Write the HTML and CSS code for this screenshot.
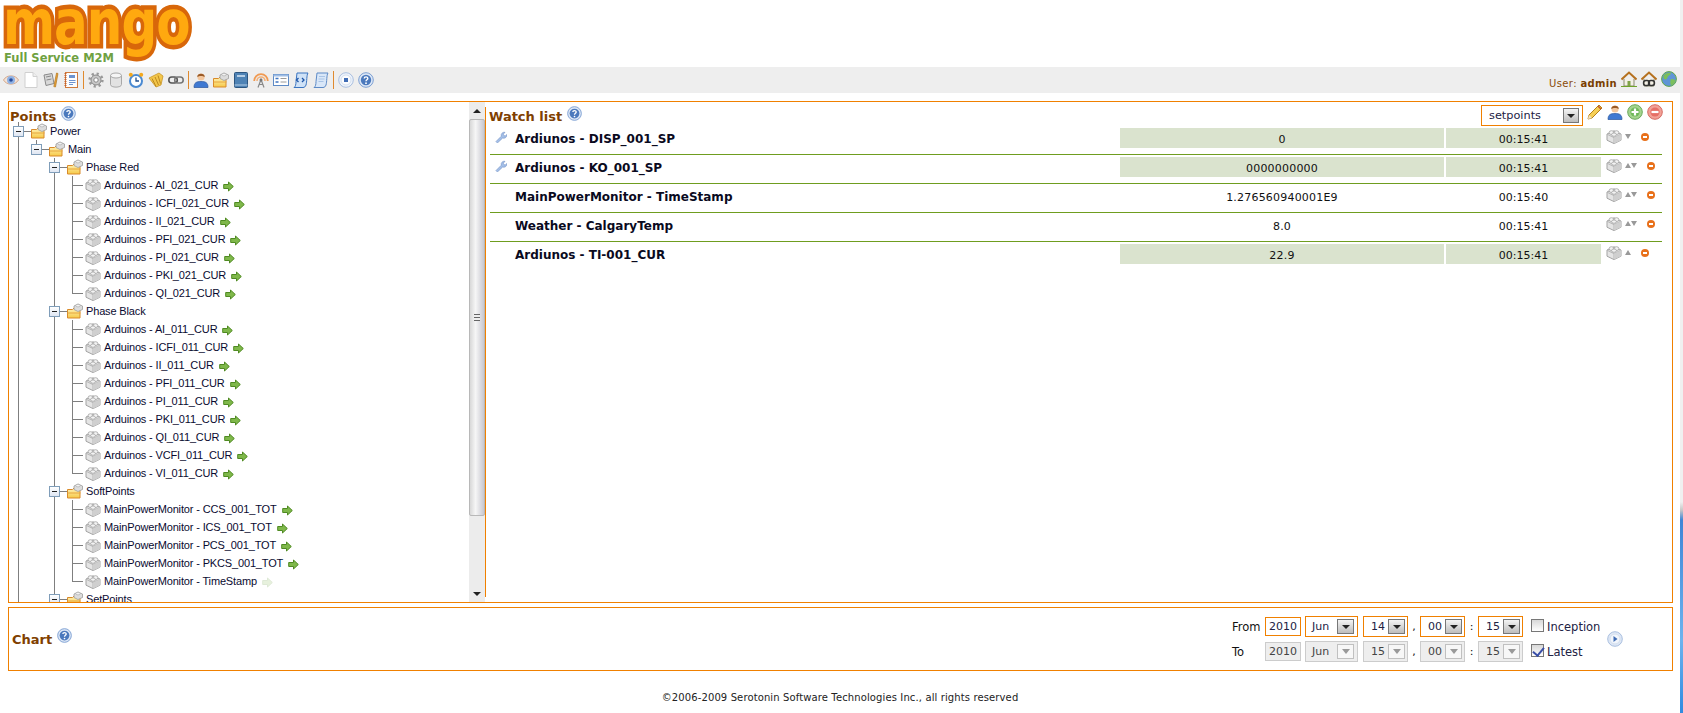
FILE: index.html
```html
<!DOCTYPE html>
<html lang="en">
<head>
<meta charset="utf-8">
<title>Mango - Watch list</title>
<link rel="stylesheet" href="styles.css">
</head>
<body>
<svg class="defs" width="0" height="0" aria-hidden="true">
  <defs>
    <linearGradient id="gYel" x1="0" y1="0" x2="0" y2="1"><stop offset="0" stop-color="#fff3b8"/><stop offset="1" stop-color="#f6c948"/></linearGradient>
    <symbol id="brick" viewBox="0 0 16 16">
      <path d="M1 6 8 2.800 15 6v6.200L8 15.600 1 12.200z" fill="#e4e4e4" stroke="#a3a3a3"/>
      <path d="M1 6.200 8 9.600 15 6.200M8 9.600v6" fill="none" stroke="#b5b5b5"/>
      <path d="M8 9.600 15 6.200v6L8 15.600z" fill="#cfcfcf"/>
      <ellipse cx="5.500" cy="4.600" rx="2.400" ry="1.900" fill="#f3f3f3" stroke="#a3a3a3" stroke-width=".8"/>
      <ellipse cx="10.500" cy="4.600" rx="2.400" ry="1.900" fill="#f3f3f3" stroke="#a3a3a3" stroke-width=".8"/>
      <ellipse cx="8" cy="6.600" rx="2.400" ry="1.700" fill="#f3f3f3" stroke="#a3a3a3" stroke-width=".8"/>
    </symbol>
    <symbol id="folder" viewBox="0 0 16 16">
      <path d="M.5 6.500h5l1.500-1.500h6v10H.5z" fill="url(#gYel)" stroke="#d98a2a"/>
      <path d="M.5 10h13" stroke="#e6a63c"/>
      <path d="M7 3 11 1l4.500 2v3.500L11 8.500 7 6.500z" fill="#dcdcdc" stroke="#9d9d9d" stroke-width=".8"/>
      <ellipse cx="11" cy="2.600" rx="2.200" ry="1.300" fill="#f3f3f3" stroke="#a3a3a3" stroke-width=".6"/>
    </symbol>
    <symbol id="go" viewBox="0 0 11 11">
      <path d="M.7 3.500h4.800V1l4.800 4.500L5.500 10V7.500H.7z" fill="#7fb84a" stroke="#4f8a22"/>
    </symbol>
    <symbol id="help" viewBox="0 0 16 16">
      <circle cx="8" cy="8" r="7.300" fill="#dce7f6" stroke="#7d9fd2"/>
      <circle cx="8" cy="8" r="5.200" fill="#4b79bd"/>
      <path d="M6.200 6.500C6.300 4.400 9.800 4.400 9.800 6.400 9.800 7.800 8 7.700 8 9.200" fill="none" stroke="#fff" stroke-width="1.400"/>
      <circle cx="8" cy="11.200" r=".9" fill="#fff"/>
    </symbol>
    <symbol id="eye" viewBox="0 0 16 16">
      <path d="M.5 8C3.500 2.500 12.500 2.500 15.500 8 12.500 13.500 3.500 13.500.5 8z" fill="#f4e2d6" stroke="#d3a88c"/>
      <circle cx="8" cy="8" r="4" fill="#8fb2e4"/><circle cx="8" cy="8" r="1.800" fill="#2a4c9a"/>
    </symbol>
    <symbol id="page" viewBox="0 0 16 16"><path d="M2 .5h8l4 4v11H2z" fill="#fff" stroke="#d0d0d0"/><path d="M10 .5v4h4" fill="#eee" stroke="#d0d0d0"/></symbol>
    <symbol id="tools" viewBox="0 0 16 16">
      <path d="M1 3l8-1.500 2 10-8 2z" fill="#d8d8d8" stroke="#8a8a8a"/><path d="M3 5l5-1M3.500 8l5-1" stroke="#8a8a8a"/>
      <path d="M13.500 1 15 1.500 12.500 15 10.800 14.600z" fill="#e9a43a" stroke="#a86a10" stroke-width=".6"/>
    </symbol>
    <symbol id="note" viewBox="0 0 16 16">
      <rect x="2.500" y=".5" width="12" height="15" fill="#fdfdfd" stroke="#d07a3c"/><path d="M2.500 1v14" stroke="#c6602a" stroke-width="2" stroke-dasharray="1 1"/>
      <rect x="6" y="3" width="6" height="3" fill="#6d93cf"/><path d="M6 8.500h6.500M6 10.500h6.500M6 12.500h4" stroke="#6d93cf"/>
    </symbol>
    <symbol id="gear" viewBox="0 0 16 16">
      <circle cx="8" cy="8" r="5" fill="#c9c9c9" stroke="#888"/>
      <circle cx="8" cy="8" r="6.400" fill="none" stroke="#999" stroke-width="2.500" stroke-dasharray="2.200 2.800"/>
      <circle cx="8" cy="8" r="2.200" fill="#fff" stroke="#888"/>
    </symbol>
    <symbol id="db" viewBox="0 0 16 16">
      <path d="M2.500 3.500v9C2.500 16 13.500 16 13.500 12.500v-9z" fill="#e2e2e2" stroke="#a8a8a8"/>
      <ellipse cx="8" cy="3.500" rx="5.500" ry="2.500" fill="#f5f5f5" stroke="#a8a8a8"/>
    </symbol>
    <symbol id="clock" viewBox="0 0 16 16">
      <circle cx="8" cy="9" r="6" fill="#fff" stroke="#4a8ad2" stroke-width="2"/>
      <path d="M8 5.500V9h3" fill="none" stroke="#1f4f90" stroke-width="1.300"/>
      <circle cx="2.800" cy="2.800" r="2" fill="#f4a81c"/><circle cx="13.200" cy="2.800" r="2" fill="#f4a81c"/>
    </symbol>
    <symbol id="horn" viewBox="0 0 16 16">
      <path d="M1 6 11 1l4 3-2 9-5 2z" fill="#f3c64a" stroke="#c8952a" stroke-width=".8"/>
      <path d="M4 6.500l4 8M7 5l3.500 8M10 3.500l2.500 8" stroke="#b5811a" stroke-width=".9"/>
    </symbol>
    <symbol id="link" viewBox="0 0 16 16">
      <rect x=".8" y="5" width="8.500" height="6" rx="3" fill="none" stroke="#555" stroke-width="1.600"/>
      <rect x="6.700" y="5" width="8.500" height="6" rx="3" fill="none" stroke="#777" stroke-width="1.600"/>
    </symbol>
    <symbol id="user" viewBox="0 0 16 16">
      <path d="M1 15.500c0-5 2.500-6 7-6s7 1 7 6z" fill="#3f79d2" stroke="#2a569c" stroke-width=".7"/>
      <circle cx="8" cy="5" r="3.600" fill="#f3c79e"/><path d="M4.300 5C4 .7 12 .7 11.700 5 10 3.500 6 3.500 4.300 5z" fill="#9a5a26"/>
    </symbol>
    <symbol id="book" viewBox="0 0 16 16">
      <rect x="1.500" y=".5" width="13" height="15" rx="1" fill="#4f83b5" stroke="#2d5680"/>
      <rect x="4" y="3" width="8" height="2" fill="#b7cfe6"/><path d="M1.500 13h13" stroke="#b7cfe6"/>
    </symbol>
    <symbol id="tower" viewBox="0 0 16 16">
      <path d="M1.200 9a6.800 6.800 0 0 1 13.600 0" fill="none" stroke="#f09a52" stroke-width="1.800"/>
      <path d="M4 9a4 4 0 0 1 8 0" fill="none" stroke="#f4b27a" stroke-width="1.600"/>
      <path d="M5 15.500 8 7.500l3 8M6 12.500h4" fill="none" stroke="#888" stroke-width="1.200"/><circle cx="8" cy="8" r="1.500" fill="#777"/>
    </symbol>
    <symbol id="form" viewBox="0 0 16 16">
      <rect x=".5" y="2.500" width="15" height="11" fill="#fff" stroke="#5d8ac6"/><path d="M.5 3.500h15" stroke="#9fbde4" stroke-width="2"/>
      <path d="M2.500 6.500h3M2.500 10h3" stroke="#3f74c0" stroke-width="1.500"/><path d="M7.500 6.500h6M7.500 10h6" stroke="#9a9a9a"/>
    </symbol>
    <symbol id="script" viewBox="0 0 16 16">
      <path d="M4 1h11c-1.500 2-1 9-2 12-.5 1.500-1.500 2.500-3 2.500H1c1.500-1 2-3 2-6z" fill="#cfe2f7" stroke="#3a74c0"/>
      <path d="M5.500 6 3.500 8l2 2M9 6l2 2-2 2" fill="none" stroke="#1f56a8" stroke-width="1.300"/>
    </symbol>
    <symbol id="script2" viewBox="0 0 16 16">
      <path d="M4 1h11c-1.500 2-1 9-2 12-.5 1.500-1.500 2.500-3 2.500H1c1.500-1 2-3 2-6z" fill="#d9e7f8" stroke="#5d8ac6"/>
      <path d="M6 4.500h6M5.500 7h6M5.500 9.500h5" stroke="#a9c4e6"/>
    </symbol>
    <symbol id="stop" viewBox="0 0 16 16">
      <circle cx="8" cy="8" r="7.300" fill="#eef3fb" stroke="#a9bfdf"/><circle cx="8" cy="8" r="5" fill="#fbfcfe" stroke="#d3dfef"/><rect x="6" y="6" width="4" height="4" fill="#3f6cb5"/>
    </symbol>
    <symbol id="play" viewBox="0 0 16 16">
      <circle cx="8" cy="8" r="7.300" fill="#dfe8f6" stroke="#a9bfdf"/><circle cx="8" cy="8" r="5" fill="#f2f6fc" stroke="#d3dfef"/><path d="M6.500 5 10.500 8l-4 3z" fill="#3f6cb5"/>
    </symbol>
    <symbol id="home" viewBox="0 0 16 16">
      <path d="M3 8v7h10V8" fill="#f3f0e6" stroke="#8a8a70"/><rect x="6.500" y="10" width="3" height="5" fill="#7fa24a"/>
      <path d="M.5 8.500 8 1.500l7.500 7" fill="none" stroke="#b5711f" stroke-width="2"/>
      <path d="M0 15.500h16" stroke="#6fa32a"/>
    </symbol>
    <symbol id="homelink" viewBox="0 0 16 16">
      <path d="M3 8v7h10V8" fill="#f3f0e6" stroke="#8a8a70"/>
      <path d="M.5 8.500 8 1.500l7.500 7" fill="none" stroke="#b5711f" stroke-width="2"/>
      <rect x="2.500" y="9.500" width="6" height="5" rx="2.500" fill="none" stroke="#333" stroke-width="1.400"/><rect x="7.500" y="9.500" width="6" height="5" rx="2.500" fill="none" stroke="#333" stroke-width="1.400"/>
    </symbol>
    <symbol id="globe" viewBox="0 0 16 16">
      <circle cx="8" cy="8" r="7.400" fill="#5f95d6" stroke="#63a84a"/>
      <path d="M3 4c2-2 5-2.500 7-2 0 2-2 2-3 3.500S6 9 4 8.500 2 6 3 4zM10 8c2 0 4 .5 4.500 1.500-.5 2.500-2.500 4.500-4.500 5-1-2-1-4.500 0-6.500z" fill="#7cc05a"/>
    </symbol>
    <symbol id="pencil" viewBox="0 0 16 16">
      <path d="M1 15l1-4L12 1l3 3L5 14z" fill="#f6cf55" stroke="#b5811a"/><path d="M1 15l1-4 3 3z" fill="#f4e3c4"/><path d="M11 2l3 3" stroke="#c0562a" stroke-width="1.500"/>
    </symbol>
    <symbol id="add" viewBox="0 0 16 16">
      <circle cx="8" cy="8" r="7.300" fill="#a4d48e" stroke="#6ba85a"/><circle cx="8" cy="8" r="4.600" fill="#6fb85a"/><path d="M8 4.500v7M4.500 8h7" stroke="#fff" stroke-width="2.200"/>
    </symbol>
    <symbol id="del" viewBox="0 0 16 16">
      <circle cx="8" cy="8" r="7.300" fill="#f2a096" stroke="#d56a62"/><circle cx="8" cy="8" r="4.600" fill="#e66f66"/><path d="M4.500 8h7" stroke="#fff" stroke-width="2.200"/>
    </symbol>
    <symbol id="wrench" viewBox="0 0 12 12">
      <path d="M1 10.500 6.300 5.200C5.600 3 7.500.8 10 1.300L8.300 3.200 9 4.700l1.500.3L11.800 3.400C12.200 6 10 7.800 7.700 7L2.400 12z" fill="#a5c0e8" stroke="#6f8fc5" stroke-width=".6"/>
    </symbol>
  </defs>
</svg>

<div class="desktop-edge"></div>

<div class="page">
  <header class="masthead">
    <div class="logo"><span class="logo-word">mango</span><span class="logo-tag">Full Service M2M</span></div>
  </header>

  <nav class="toolbar">
    <div class="tools">
      <svg class="ic"><use href="#eye"/></svg>
      <svg class="ic"><use href="#page"/></svg>
      <svg class="ic"><use href="#tools"/></svg>
      <svg class="ic"><use href="#note"/></svg>
      <span class="tsep"></span>
      <svg class="ic"><use href="#gear"/></svg>
      <svg class="ic"><use href="#db"/></svg>
      <svg class="ic"><use href="#clock"/></svg>
      <svg class="ic"><use href="#horn"/></svg>
      <svg class="ic"><use href="#link"/></svg>
      <span class="tsep"></span>
      <svg class="ic"><use href="#user"/></svg>
      <svg class="ic"><use href="#folder"/></svg>
      <svg class="ic"><use href="#book"/></svg>
      <svg class="ic"><use href="#tower"/></svg>
      <svg class="ic"><use href="#form"/></svg>
      <svg class="ic"><use href="#script"/></svg>
      <svg class="ic"><use href="#script2"/></svg>
      <span class="tsep"></span>
      <svg class="ic"><use href="#stop"/></svg>
      <svg class="ic"><use href="#help"/></svg>
    </div>
    <div class="session">
      <span class="user-line">User: <b>admin</b></span>
      <svg class="ic"><use href="#home"/></svg>
      <svg class="ic"><use href="#homelink"/></svg>
      <svg class="ic"><use href="#globe"/></svg>
    </div>
  </nav>

  <main class="panel">
    <section class="points">
      <div class="tree-col">
        <h2 class="title">Points <svg class="ic help"><use href="#help"/></svg></h2>
        <ul class="tree">
          <li class="node"><div class="row"><span class="box"></span><span class="dash"></span><svg class="ic"><use href="#folder"/></svg><span class="label">Power</span></div>
            <ul>
              <li class="node last"><div class="row"><span class="box"></span><span class="dash"></span><svg class="ic"><use href="#folder"/></svg><span class="label">Main</span></div>
                <ul>
                  <li class="node"><div class="row"><span class="box"></span><span class="dash"></span><svg class="ic"><use href="#folder"/></svg><span class="label">Phase Red</span></div>
                    <ul>
                      <li class="node"><div class="row"><span class="tick"></span><svg class="ic"><use href="#brick"/></svg><span class="label">Arduinos - AI_021_CUR</span><svg class="go"><use href="#go"/></svg></div></li>
                      <li class="node"><div class="row"><span class="tick"></span><svg class="ic"><use href="#brick"/></svg><span class="label">Arduinos - ICFI_021_CUR</span><svg class="go"><use href="#go"/></svg></div></li>
                      <li class="node"><div class="row"><span class="tick"></span><svg class="ic"><use href="#brick"/></svg><span class="label">Arduinos - II_021_CUR</span><svg class="go"><use href="#go"/></svg></div></li>
                      <li class="node"><div class="row"><span class="tick"></span><svg class="ic"><use href="#brick"/></svg><span class="label">Arduinos - PFI_021_CUR</span><svg class="go"><use href="#go"/></svg></div></li>
                      <li class="node"><div class="row"><span class="tick"></span><svg class="ic"><use href="#brick"/></svg><span class="label">Arduinos - PI_021_CUR</span><svg class="go"><use href="#go"/></svg></div></li>
                      <li class="node"><div class="row"><span class="tick"></span><svg class="ic"><use href="#brick"/></svg><span class="label">Arduinos - PKI_021_CUR</span><svg class="go"><use href="#go"/></svg></div></li>
                      <li class="node last"><div class="row"><span class="tick"></span><svg class="ic"><use href="#brick"/></svg><span class="label">Arduinos - QI_021_CUR</span><svg class="go"><use href="#go"/></svg></div></li>
                    </ul>
                  </li>
                  <li class="node"><div class="row"><span class="box"></span><span class="dash"></span><svg class="ic"><use href="#folder"/></svg><span class="label">Phase Black</span></div>
                    <ul>
                      <li class="node"><div class="row"><span class="tick"></span><svg class="ic"><use href="#brick"/></svg><span class="label">Arduinos - AI_011_CUR</span><svg class="go"><use href="#go"/></svg></div></li>
                      <li class="node"><div class="row"><span class="tick"></span><svg class="ic"><use href="#brick"/></svg><span class="label">Arduinos - ICFI_011_CUR</span><svg class="go"><use href="#go"/></svg></div></li>
                      <li class="node"><div class="row"><span class="tick"></span><svg class="ic"><use href="#brick"/></svg><span class="label">Arduinos - II_011_CUR</span><svg class="go"><use href="#go"/></svg></div></li>
                      <li class="node"><div class="row"><span class="tick"></span><svg class="ic"><use href="#brick"/></svg><span class="label">Arduinos - PFI_011_CUR</span><svg class="go"><use href="#go"/></svg></div></li>
                      <li class="node"><div class="row"><span class="tick"></span><svg class="ic"><use href="#brick"/></svg><span class="label">Arduinos - PI_011_CUR</span><svg class="go"><use href="#go"/></svg></div></li>
                      <li class="node"><div class="row"><span class="tick"></span><svg class="ic"><use href="#brick"/></svg><span class="label">Arduinos - PKI_011_CUR</span><svg class="go"><use href="#go"/></svg></div></li>
                      <li class="node"><div class="row"><span class="tick"></span><svg class="ic"><use href="#brick"/></svg><span class="label">Arduinos - QI_011_CUR</span><svg class="go"><use href="#go"/></svg></div></li>
                      <li class="node"><div class="row"><span class="tick"></span><svg class="ic"><use href="#brick"/></svg><span class="label">Arduinos - VCFI_011_CUR</span><svg class="go"><use href="#go"/></svg></div></li>
                      <li class="node last"><div class="row"><span class="tick"></span><svg class="ic"><use href="#brick"/></svg><span class="label">Arduinos - VI_011_CUR</span><svg class="go"><use href="#go"/></svg></div></li>
                    </ul>
                  </li>
                  <li class="node"><div class="row"><span class="box"></span><span class="dash"></span><svg class="ic"><use href="#folder"/></svg><span class="label">SoftPoints</span></div>
                    <ul>
                      <li class="node"><div class="row"><span class="tick"></span><svg class="ic"><use href="#brick"/></svg><span class="label">MainPowerMonitor - CCS_001_TOT</span><svg class="go"><use href="#go"/></svg></div></li>
                      <li class="node"><div class="row"><span class="tick"></span><svg class="ic"><use href="#brick"/></svg><span class="label">MainPowerMonitor - ICS_001_TOT</span><svg class="go"><use href="#go"/></svg></div></li>
                      <li class="node"><div class="row"><span class="tick"></span><svg class="ic"><use href="#brick"/></svg><span class="label">MainPowerMonitor - PCS_001_TOT</span><svg class="go"><use href="#go"/></svg></div></li>
                      <li class="node"><div class="row"><span class="tick"></span><svg class="ic"><use href="#brick"/></svg><span class="label">MainPowerMonitor - PKCS_001_TOT</span><svg class="go"><use href="#go"/></svg></div></li>
                      <li class="node last"><div class="row"><span class="tick"></span><svg class="ic"><use href="#brick"/></svg><span class="label">MainPowerMonitor - TimeStamp</span><svg class="go faded"><use href="#go"/></svg></div></li>
                    </ul>
                  </li>
                  <li class="node"><div class="row"><span class="box"></span><span class="dash"></span><svg class="ic"><use href="#folder"/></svg><span class="label">SetPoints</span></div></li>
                </ul>
              </li>
            </ul>
          </li>
        </ul>
      </div>
      <div class="vscroll">
        <span class="sb-btn"><i class="tri up dark"></i></span>
        <span class="sb-thumb"><i class="grip"></i></span>
        <span class="sb-track"></span>
        <span class="sb-btn"><i class="tri down dark"></i></span>
      </div>
    </section>
    <span class="divider"></span>

    <section class="watch">
      <div class="watch-head">
        <h2 class="title">Watch list <svg class="ic help"><use href="#help"/></svg></h2>
        <div class="watch-tools">
          <div class="sel wide"><span>setpoints</span><i class="arrow"><i class="tri down dark"></i></i></div>
          <svg class="ic"><use href="#pencil"/></svg>
          <svg class="ic"><use href="#user"/></svg>
          <svg class="ic"><use href="#add"/></svg>
          <svg class="ic"><use href="#del"/></svg>
        </div>
      </div>

      <div class="wrow">
        <svg class="wrench"><use href="#wrench"/></svg>
        <span class="wname">Ardiunos - DISP_001_SP</span>
        <span class="wval on">0</span>
        <span class="wtime on">00:15:41</span>
        <span class="wact"><svg class="ic"><use href="#brick"/></svg><i class="tri down"></i><i class="rm"></i></span>
      </div>
      <div class="wrow">
        <svg class="wrench"><use href="#wrench"/></svg>
        <span class="wname">Ardiunos - KO_001_SP</span>
        <span class="wval on">0000000000</span>
        <span class="wtime on">00:15:41</span>
        <span class="wact"><svg class="ic"><use href="#brick"/></svg><span class="updown"><i class="tri up"></i><i class="tri down"></i></span><i class="rm"></i></span>
      </div>
      <div class="wrow">
        <span class="wnone"></span>
        <span class="wname">MainPowerMonitor - TimeStamp</span>
        <span class="wval">1.276560940001E9</span>
        <span class="wtime">00:15:40</span>
        <span class="wact"><svg class="ic"><use href="#brick"/></svg><span class="updown"><i class="tri up"></i><i class="tri down"></i></span><i class="rm"></i></span>
      </div>
      <div class="wrow">
        <span class="wnone"></span>
        <span class="wname">Weather - CalgaryTemp</span>
        <span class="wval">8.0</span>
        <span class="wtime">00:15:41</span>
        <span class="wact"><svg class="ic"><use href="#brick"/></svg><span class="updown"><i class="tri up"></i><i class="tri down"></i></span><i class="rm"></i></span>
      </div>
      <div class="wrow end">
        <span class="wnone"></span>
        <span class="wname">Ardiunos - TI-001_CUR</span>
        <span class="wval on">22.9</span>
        <span class="wtime on">00:15:41</span>
        <span class="wact"><svg class="ic"><use href="#brick"/></svg><i class="tri up"></i><i class="rm"></i></span>
      </div>
    </section>
  </main>

  <section class="chart">
    <h2 class="title">Chart <svg class="ic help"><use href="#help"/></svg></h2>
    <form class="range">
      <div class="range-rows">
        <div class="drow">
          <span class="dlabel">From</span>
          <span class="yr">2010</span>
          <div class="sel mon"><span>Jun</span><i class="arrow"><i class="tri down dark"></i></i></div>
          <div class="sel num"><span>14</span><i class="arrow"><i class="tri down dark"></i></i></div>
          <span class="punct">,</span>
          <div class="sel num"><span>00</span><i class="arrow"><i class="tri down dark"></i></i></div>
          <span class="punct">:</span>
          <div class="sel num"><span>15</span><i class="arrow"><i class="tri down dark"></i></i></div>
          <label class="chk"><i class="cbox"></i>Inception</label>
        </div>
        <div class="drow off">
          <span class="dlabel">To</span>
          <span class="yr">2010</span>
          <div class="sel mon"><span>Jun</span><i class="arrow"><i class="tri down"></i></i></div>
          <div class="sel num"><span>15</span><i class="arrow"><i class="tri down"></i></i></div>
          <span class="punct">,</span>
          <div class="sel num"><span>00</span><i class="arrow"><i class="tri down"></i></i></div>
          <span class="punct">:</span>
          <div class="sel num"><span>15</span><i class="arrow"><i class="tri down"></i></i></div>
          <label class="chk"><i class="cbox checked"></i>Latest</label>
        </div>
      </div>
      <svg class="ic"><use href="#play"/></svg>
    </form>
  </section>

  <footer class="foot">©2006-2009 Serotonin Software Technologies Inc., all rights reserved</footer>
</div>
</body>
</html>
```

FILE: styles.css
```css
* { box-sizing: border-box; }
html, body { margin: 0; padding: 0; height: 713px; overflow: hidden; background: #fff; }
body { font-family: "DejaVu Sans", Verdana, sans-serif; font-size: 11px; color: #111; position: relative; }
.defs { position: absolute; }
ul { list-style: none; margin: 0; padding: 0; }
i { font-style: normal; display: block; }
svg { display: block; flex: none; }
.ic { width: 16px; height: 16px; }

.desktop-edge {
  position: absolute; right: 0; top: 0; bottom: 0; width: 3px;
  background: linear-gradient(#f0f0f0 0, #f0f0f0 502px, #c8c8c8 510px, #3f86d6 520px, #6db3ee 640px, #2f8be0 713px);
}

.page { width: 1680px; }

/* header */
.masthead { height: 67px; }
.logo { display: flex; flex-direction: column; width: 200px; height: 67px; }
.logo-word {
  display: block; height: 40px; margin-bottom: 11px; padding-left: 3px;
  font: bold 50px/37px "DejaVu Sans", sans-serif;
  color: #ffa90f; letter-spacing: -1px;
  -webkit-text-stroke: 7px #d8670a; paint-order: stroke fill;
  transform: scaleY(1.26); transform-origin: 0 0;
}
.logo-tag {
  margin: 1px 0 0 4px; position: relative;
  font: bold 11.500px/13px "DejaVu Sans", sans-serif; color: #6fa142; white-space: nowrap;
}

.toolbar {
  height: 26px; background: #eeeeee; display: flex; justify-content: space-between; align-items: center;
  padding: 0 3px;
}
.tools { display: flex; align-items: center; gap: 4px; }
.tsep { width: 1px; height: 18px; background: #e08a2e; }
.session { display: flex; align-items: center; gap: 4px; margin-top: -3px; }
.user-line { font-size: 10px; color: #8a4b08; letter-spacing: .35px; margin-top: 9px; }
.user-line b { color: #7a3e00; }

/* panels */
.panel {
  margin: 8px 7px 0 8px; height: 502px; border: 1px solid #f08000; display: flex; overflow: hidden;
}
.points { width: 476px; display: flex; flex: none; }
.tree-col { width: 460px; height: 500px; overflow: hidden; flex: none; }
.title {
  margin: 0; display: flex; align-items: flex-start; gap: 5px;
  font: bold 13px/16px "DejaVu Sans", sans-serif; color: #7f4000;
}
.title .help { width: 15px; height: 15px; margin-top: -3px; }
.tree-col > .title { height: 20px; padding: 7px 0 0 1px; }

.tree { padding-left: 4px; font: 11px/18px "Liberation Sans", Arial, sans-serif; letter-spacing: -.15px; color: #0a0a30; }
.tree ul { padding-left: 18px; }
.node { position: relative; }
.node::before { content: ""; position: absolute; left: 5px; top: 0; bottom: 0; width: 1px; background: #7f7f7f; }
.node.last::before { bottom: auto; height: 9px; }
.row { display: flex; align-items: center; height: 18px; white-space: nowrap; position: relative; }
.box { width: 11px; height: 11px; flex: none; border: 1px solid #7f9db9; background: linear-gradient(#fff, #dfe6f2); position: relative; }
.box::after { content: ""; position: absolute; left: 2px; right: 2px; top: 4px; height: 1px; background: #222; }
.dash { width: 7px; height: 1px; background: #7f7f7f; flex: none; }
.tick { flex: none; height: 1px; margin: 0 2px 0 5px; width: 11px; background: #7f7f7f; }
.label { margin-left: 3px; }
.go { width: 11px; height: 11px; margin: 2px 0 0 5px; }
.go.faded { opacity: .18; }

.vscroll { width: 16px; display: flex; flex-direction: column; background: #ececec; flex: none; }
.sb-btn { height: 17px; display: flex; align-items: center; justify-content: center; flex: none; }
.sb-thumb {
  height: 397px; flex: none; display: flex; align-items: center; justify-content: center;
  background: linear-gradient(90deg, #d8d8d8, #f6f6f6 40%, #c8c8d0); border: 1px solid #b8b8b8; border-radius: 2px;
}
.grip { width: 6px; height: 7px; background: repeating-linear-gradient(#666 0 1px, #eee 1px 3px); }
.sb-track { flex: 1; }
.tri { width: 0; height: 0; border-left: 4px solid transparent; border-right: 4px solid transparent; flex: none; }
.tri.up { border-bottom: 5px solid #999; }
.tri.down { border-top: 5px solid #999; }
.tri.up.dark { border-bottom: 4px solid #222; }
.tri.down.dark { border-top: 4px solid #222; }
.updown { display: flex; }
.updown .tri { border-left-width: 3.500px; border-right-width: 3.500px; }

.divider { width: 1px; background: #f08000; margin: 5px 0; flex: none; }

.watch { flex: 1; padding: 0 10px 0 4px; min-width: 0; }
.watch-head { height: 24px; display: flex; justify-content: space-between; align-items: flex-start; }
.watch-head .title { padding-top: 7px; margin-left: -1px; }
.watch-tools { display: flex; gap: 4px; align-items: flex-start; padding-top: 2px; margin-right: -1px; }
.sel {
  display: flex; align-items: center; justify-content: space-between;
  border: 1px solid #f08000; height: 21px; padding: 0 3px 0 7px; color: #222244; background: #fff;
}
.sel.wide { width: 102px; margin-top: 1px; font-size: 11.300px; }
.arrow {
  width: 16px; height: 15px; flex: none; border: 1px solid #777; display: flex; align-items: center; justify-content: center;
  background: linear-gradient(#f4f4f4, #bdbdbd);
}
.wrow {
  display: grid; grid-template-columns: 25px 605px 324px 157px 1fr; height: 29px; padding-top: 2px;
  border-bottom: 1px solid #6f9d1f; align-items: start;
}
.wrow.end { border-bottom: 0; }
.wrench { width: 12px; height: 12px; margin: 3px 0 0 5px; }
.wname { font-weight: bold; font-size: 12px; line-height: 23px; color: #0a0a1e; }
.wval, .wtime { height: 20px; line-height: 23px; text-align: center; }
.wval { letter-spacing: .2px; }
.wtime { margin-left: 2px; }
.on { background: #dae3ce; }
.wact { display: flex; align-items: center; gap: 4px; padding-left: 5px; height: 16px; }
.wact .ic { margin-right: -1px; }
.wact .tri.down, .wact .tri.up { border-left-width: 3.500px; border-right-width: 3.500px; }
.rm {
  width: 8px; height: 8px; border-radius: 50%; background: #e8701a; flex: none; margin: 1px 0 0 6px; position: relative;
}
.rm::after { content: ""; position: absolute; left: 2px; right: 2px; top: 3px; height: 2px; background: #fff; }

.chart {
  margin: 4px 7px 0 8px; height: 64px; border: 1px solid #f08000; display: flex; justify-content: space-between; align-items: center;
  padding: 0 49px 0 3px;
}
.chart .title { margin-top: 2px; }
.chart .title .help { margin-top: -4px; }
.range { display: flex; align-items: center; gap: 7px; }
.range-rows { display: flex; flex-direction: column; gap: 4px; }
.drow { display: flex; align-items: center; height: 21px; }
.dlabel { width: 33px; font-size: 11.500px; }
.yr { width: 36px; height: 19px; border: 1px solid #f08000; text-align: center; line-height: 17px; color: #222244; margin-right: 4px; }
.sel.mon { width: 53px; margin-right: 5px; padding-left: 6px; }
.sel.num { width: 45px; padding-left: 7px; }
.sel.mon .arrow, .sel.num .arrow { width: 17px; }
.sel.num .arrow { margin-right: -1px; }
.punct { width: 12px; text-align: center; }
.punct + .sel + .punct { width: 13px; }
.chk { display: flex; align-items: center; gap: 3px; margin-left: 8px; width: 69px; color: #222244; font-size: 11.500px; }
.cbox { width: 13px; height: 13px; border: 1px solid #777; background: linear-gradient(#d8d8d8, #fff); flex: none; position: relative; margin-top: -2px; }
.cbox.checked::after {
  content: ""; position: absolute; left: 3px; top: 0; width: 5px; height: 9px;
  border: solid #3a4fa8; border-width: 0 2px 2px 0; transform: rotate(40deg);
}
.off .yr, .off .sel { background: #eeeeee; border-color: #cccccc; color: #444; }
.off .arrow { border-color: #c0c0c0; background: #f7f7f7; }

.foot { margin-top: 21px; text-align: center; font-size: 10px; letter-spacing: .12px; line-height: 12px; color: #222; }
```
